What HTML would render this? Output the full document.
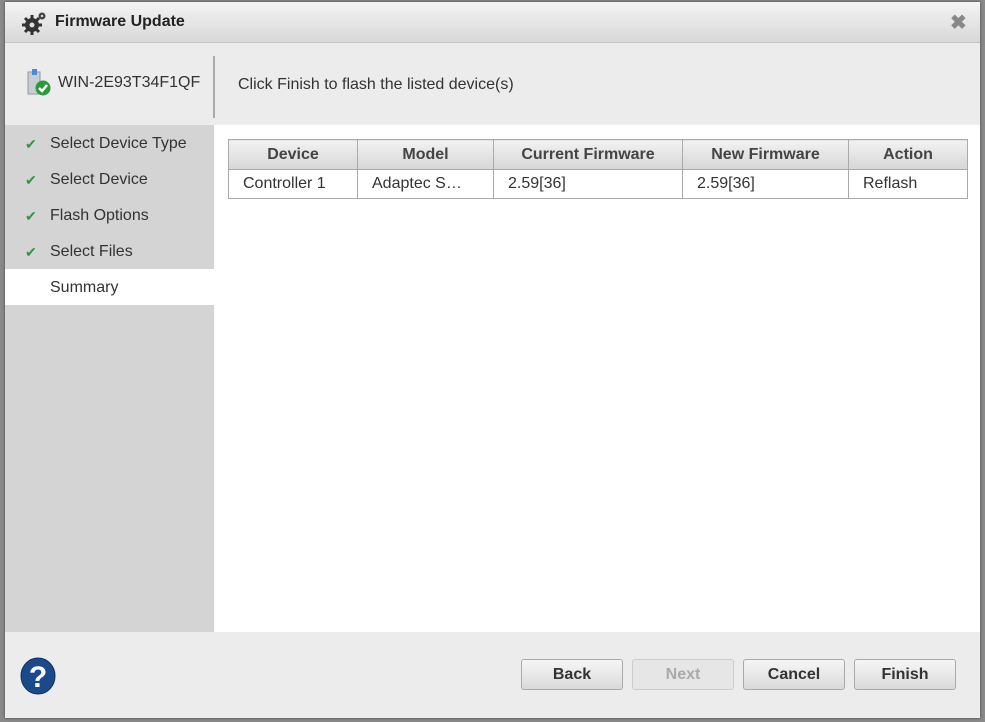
<!DOCTYPE html><html><head><style>
body{margin:0;width:985px;height:722px;background:#8a8a8a;font-family:"Liberation Sans",sans-serif;position:relative;overflow:hidden}
.d{position:absolute;left:5px;top:2px;width:975px;height:716px;background:#ececec;box-shadow:0 0 3px #444}
.t{position:absolute;left:0;top:0;width:975px;height:40px;background:linear-gradient(#f4f4f4,#d8d8d8);border-bottom:1px solid #c4c4c4}
.t span{position:absolute;left:50px;top:10px;font-weight:bold;font-size:16px;color:#222}
.sb{position:absolute;left:0;top:123px;width:209px;height:507px;background:#d4d4d4}
.it{height:36px;line-height:38px;font-size:16px;color:#333;padding-left:45px;position:relative}
.it.s{background:#fff}
.ck{position:absolute;left:20px;top:0;color:#2a9a3a;font-size:14px}
.ct{position:absolute;left:209px;top:123px;width:766px;height:507px;background:#fff}
table{position:absolute;left:14px;top:14px;width:740px;table-layout:fixed;border-collapse:collapse;font-size:16px;color:#333}
th{height:29px;padding:0;background:linear-gradient(#f2f2f2,#d6d6d6);border:1px solid #aaa;font-weight:bold;color:#444}
td{height:28px;padding:0 0 0 14px;border:1px solid #aaa;white-space:nowrap}
.b{position:absolute;top:657px;width:100px;height:29px;border:1px solid #aaa;border-radius:3px;background:linear-gradient(#f6f6f6,#dadada);font-weight:bold;font-size:16px;color:#333;text-align:center;line-height:29px}
</style></head><body>
<div class="d">
<div class="t"><svg style="position:absolute;left:17px;top:8px" width="26" height="26" viewBox="0 0 26 26"><circle cx="10" cy="15" r="7" fill="#333"/><g stroke="#333" stroke-width="3"><path d="M10 5v20M0 15h20M3 8l14 14M17 8L3 22"/></g><circle cx="10" cy="15" r="2.5" fill="#ddd"/><circle cx="20" cy="6" r="3.5" fill="#444"/><circle cx="20" cy="6" r="1.2" fill="#ddd"/></svg><span style="top:11px">Firmware Update</span>
<span style="left:945px;top:8px;font-size:20px;color:#888">✖</span></div>
<div style="position:absolute;left:208px;top:54px;width:2px;height:62px;background:#aaa"></div>
<svg style="position:absolute;left:20px;top:67px" width="28" height="28"><rect x="3" y="3" width="12" height="22" fill="#c8ccd4" stroke="#999"/><rect x="7" y="0" width="5" height="6" fill="#4a8ad8"/><circle cx="18" cy="19" r="7.5" fill="#2a9a3a"/><path d="M14 19l3 3 5-6" stroke="#fff" stroke-width="2.5" fill="none"/></svg>
<div style="position:absolute;left:53px;top:72px;font-size:16px;color:#333">WIN-2E93T34F1QF</div>
<div style="position:absolute;left:233px;top:74px;font-size:16px;color:#333">Click Finish to flash the listed device(s)</div>
<div class="sb">
<div class="it"><span class="ck">✔</span>Select Device Type</div>
<div class="it"><span class="ck">✔</span>Select Device</div>
<div class="it"><span class="ck">✔</span>Flash Options</div>
<div class="it"><span class="ck">✔</span>Select Files</div>
<div class="it s">Summary</div>
</div>
<div class="ct"><table>
<colgroup><col style="width:129px"><col style="width:136px"><col style="width:189px"><col style="width:166px"><col style="width:119px"></colgroup>
<tr><th>Device</th><th>Model</th><th>Current Firmware</th><th>New Firmware</th><th>Action</th></tr>
<tr><td>Controller 1</td><td>Adaptec S…</td><td>2.59[36]</td><td>2.59[36]</td><td>Reflash</td></tr>
</table></div>
<svg style="position:absolute;left:14px;top:655px" width="38" height="38"><ellipse cx="19" cy="19" rx="17" ry="18" fill="#1a4a8a" stroke="#0d2f5e"/><text x="19" y="30" text-anchor="middle" font-family="Liberation Sans" font-weight="bold" font-size="30" fill="#fff">?</text></svg>
<div class="b" style="left:516px">Back</div>
<div class="b" style="left:627px;color:#aaa;background:#e6e6e6;border-color:#ccc">Next</div>
<div class="b" style="left:738px">Cancel</div>
<div class="b" style="left:849px">Finish</div>
</div>
</body></html>
